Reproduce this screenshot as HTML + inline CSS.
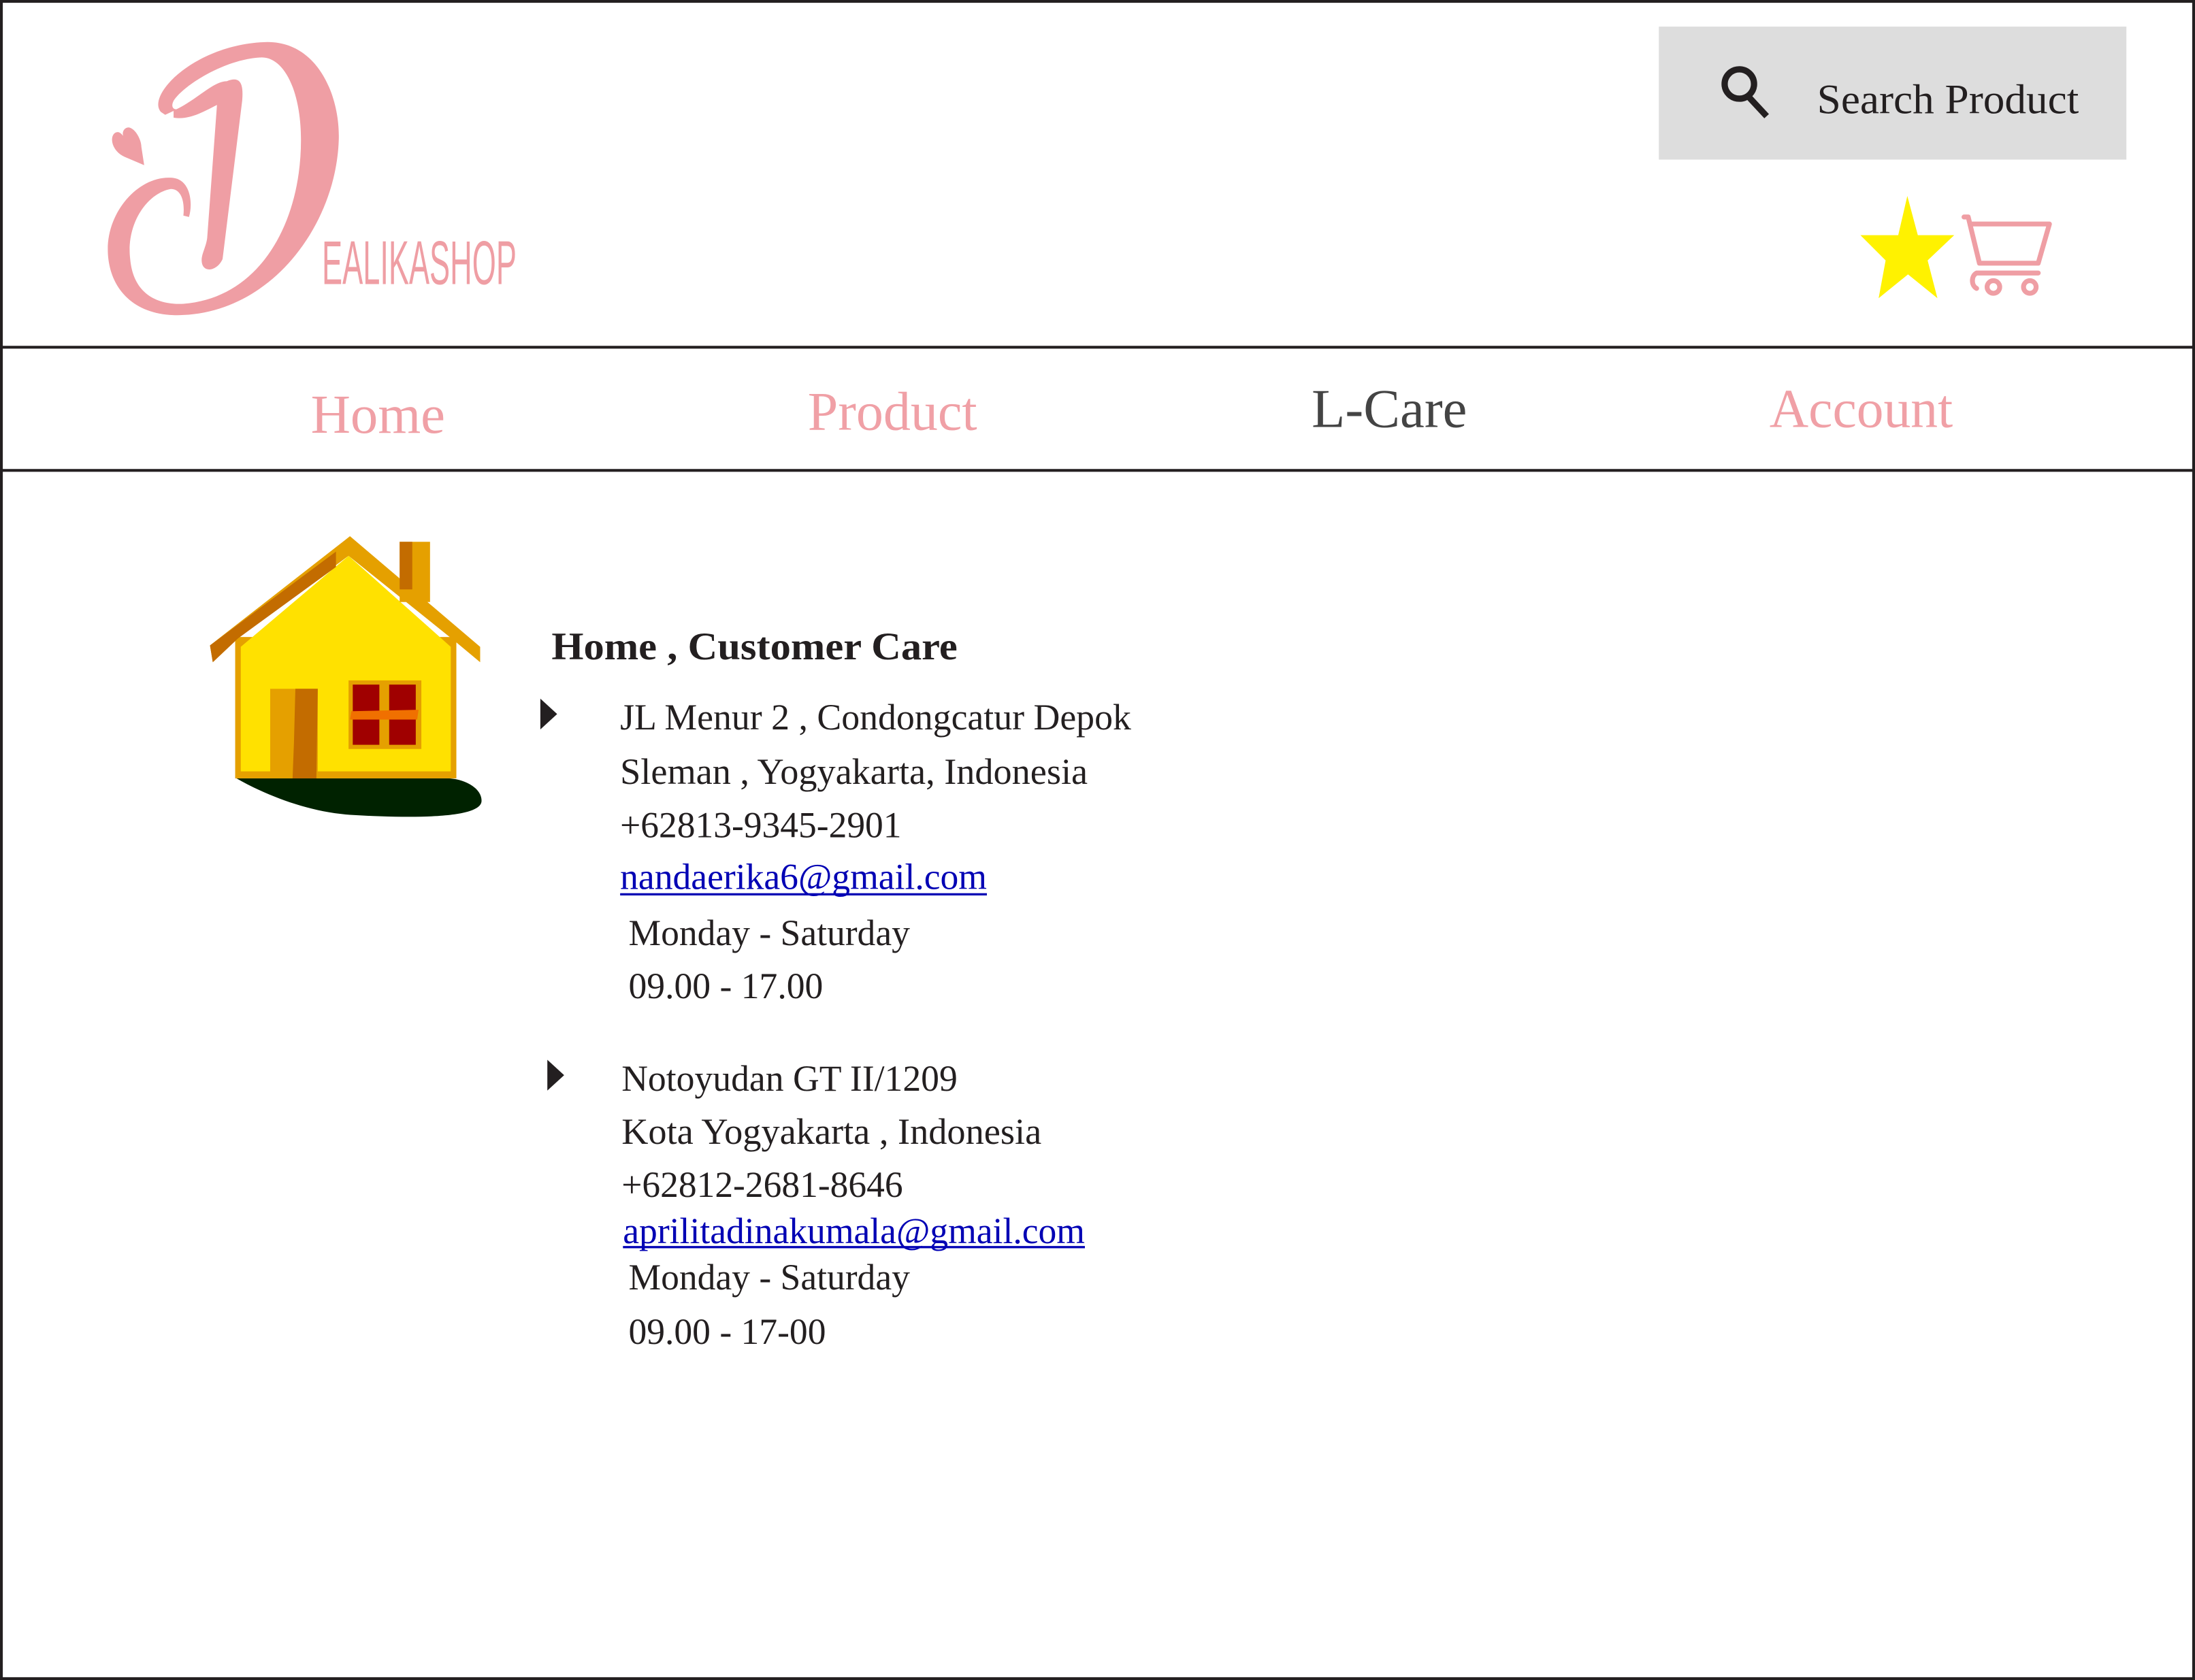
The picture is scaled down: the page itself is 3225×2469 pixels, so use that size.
<!DOCTYPE html>
<html><head><meta charset="utf-8"><style>
html,body{margin:0;padding:0;background:#fff;}
svg{display:block;}
text{font-family:"Liberation Serif",serif;}
</style></head><body>
<svg width="3225" height="2469" viewBox="0 0 1568 1200" preserveAspectRatio="none" xmlns="http://www.w3.org/2000/svg">
<rect x="0" y="0" width="1568" height="1200" fill="#fff"/>
<rect x="1" y="1" width="1566" height="1198" fill="none" stroke="#231f20" stroke-width="2"/>
<line x1="0" y1="248" x2="1568" y2="248" stroke="#231f20" stroke-width="2"/>
<line x1="0" y1="336" x2="1568" y2="336" stroke="#231f20" stroke-width="2"/>

<!-- Logo -->
<g fill="#ef9ea4">
<path d="M115,80 C104,68 140,31 191,30 C228,30 243,70 242,100 C240,160 195,222 131,225 C95,227 77,205 77,178 C77,150 100,125 123,127 C136,128 138,145 135,155 L131,154 C132,145 130,135 122,135 C105,138 90,160 93,185 C95,208 110,218 131,217 C185,213 215,160 215,100 C215,65 203,41 187,41 C160,42 130,62 124,72 C121,78 126,80 131,76 L118,82 Z"/>
<path d="M124,79 C140,72 152,58 162,58 C172,54 174,60 173,72 L159,185 C156,192 148,195 145,190 C142,184 147,178 148,170 L155,75 C145,80 135,86 124,84 Z"/>
<path d="M103,118 L89,112 C80,108 78,98 82,95 C85,93 87,96 88,97 C87,94 89,91 92,91 C97,92 101,100 101,105 Z"/>
<text x="230" y="203" font-size="44" textLength="139" lengthAdjust="spacingAndGlyphs" style="font-family:'Liberation Sans Narrow','Liberation Sans',sans-serif" font-weight="normal">EALIKASHOP</text>
</g>

<!-- Search -->
<rect x="1185" y="19" width="334" height="95" fill="#dddddd"/>
<circle cx="1242.5" cy="60" r="10.5" fill="none" stroke="#231f20" stroke-width="4.5"/>
<line x1="1249" y1="69" x2="1262" y2="83" stroke="#231f20" stroke-width="4.5"/>
<text x="1298" y="81" font-size="30" fill="#231f20" textLength="187" lengthAdjust="spacingAndGlyphs">Search Product</text>

<!-- Star -->
<polygon points="1362.5,140 1370,168 1396,168 1377,186 1384,213 1363,196 1342,213 1347,186 1329,168 1356,168" fill="#fff200"/>
<!-- Cart -->
<g fill="none" stroke="#ef9ea4" stroke-width="3.5" stroke-linecap="round" stroke-linejoin="round">
<path d="M1403,155 L1406,155 L1414,188 L1456,188 L1464,160 L1408,160"/>
<path d="M1456,195 L1412,195 C1408,197 1408,204 1412,206"/>
<circle cx="1424" cy="205" r="4.5"/>
<circle cx="1450" cy="205" r="4.5"/>
</g>

<!-- Nav -->
<text x="222" y="309" font-size="39" fill="#f0a0a6" textLength="96" lengthAdjust="spacingAndGlyphs">Home</text>
<text x="577" y="307" font-size="39" fill="#f0a0a6" textLength="121" lengthAdjust="spacingAndGlyphs">Product</text>
<text x="937" y="305" font-size="39" fill="#444444" textLength="111" lengthAdjust="spacingAndGlyphs">L-Care</text>
<text x="1264" y="305" font-size="39" fill="#f0a0a6" textLength="131" lengthAdjust="spacingAndGlyphs">Account</text>

<!-- House -->
<path d="M169,556 C190,568 220,580 250,582 C300,585 344,584 344,572 C344,562 330,556 320,556 Z" fill="#002200"/>
<rect x="168" y="455" width="158" height="101" fill="#e5a000"/>
<polygon points="172,462 249,397 322,462 322,551 172,551" fill="#ffe100"/>
<polygon points="150,461 250,383 343,462 343,473 325,458 249,397 170,456 152,473" fill="#e5a000"/>
<polygon points="150,461 240,394 240,405 170,456 152,473" fill="#c36c00"/>
<rect x="285.5" y="387" width="21.7" height="43" fill="#e5a000"/>
<rect x="285.5" y="387" width="9" height="34" fill="#c36c00"/>
<rect x="193" y="492" width="34" height="64" fill="#e5a000"/>
<polygon points="211,492 227,492 226,556 209,556 210,530" fill="#c36c00"/>
<rect x="249" y="486" width="52" height="49" fill="#e5a000"/>
<rect x="252" y="489" width="19" height="43" fill="#a00000"/>
<rect x="278" y="489" width="19" height="43" fill="#a00000"/>
<polygon points="251,508 299,507 298,514 250,514" fill="#f07000"/>

<!-- Content -->
<text x="394" y="471" font-size="28" font-weight="bold" fill="#231f20" textLength="290" lengthAdjust="spacingAndGlyphs">Home , Customer Care</text>
<polygon points="386,499 398,510 386,521" fill="#231f20"/>
<polygon points="391,757 403,768 391,779" fill="#231f20"/>
<g font-size="26" fill="#231f20">
<text x="443" y="521" textLength="365" lengthAdjust="spacingAndGlyphs">JL Menur 2 , Condongcatur Depok</text>
<text x="443" y="560" textLength="334" lengthAdjust="spacingAndGlyphs">Sleman , Yogyakarta, Indonesia</text>
<text x="443" y="598" textLength="201" lengthAdjust="spacingAndGlyphs">+62813-9345-2901</text>
<text x="449" y="675" textLength="201" lengthAdjust="spacingAndGlyphs">Monday - Saturday</text>
<text x="449" y="713" textLength="139" lengthAdjust="spacingAndGlyphs">09.00 - 17.00</text>
<text x="444" y="779" textLength="240" lengthAdjust="spacingAndGlyphs">Notoyudan GT II/1209</text>
<text x="444" y="817" textLength="300" lengthAdjust="spacingAndGlyphs">Kota Yogyakarta , Indonesia</text>
<text x="444" y="855" textLength="201" lengthAdjust="spacingAndGlyphs">+62812-2681-8646</text>
<text x="449" y="921" textLength="201" lengthAdjust="spacingAndGlyphs">Monday - Saturday</text>
<text x="449" y="960" textLength="141" lengthAdjust="spacingAndGlyphs">09.00 - 17-00</text>
</g>
<g font-size="26" fill="#0000b4">
<text x="443" y="635" textLength="262" lengthAdjust="spacingAndGlyphs">nandaerika6@gmail.com</text>
<text x="445" y="888" textLength="330" lengthAdjust="spacingAndGlyphs">aprilitadinakumala@gmail.com</text>
</g>
<rect x="443" y="638" width="262" height="1.6" fill="#0000b4"/>
<rect x="445" y="890" width="330" height="1.6" fill="#0000b4"/>
</svg>
</body></html>
